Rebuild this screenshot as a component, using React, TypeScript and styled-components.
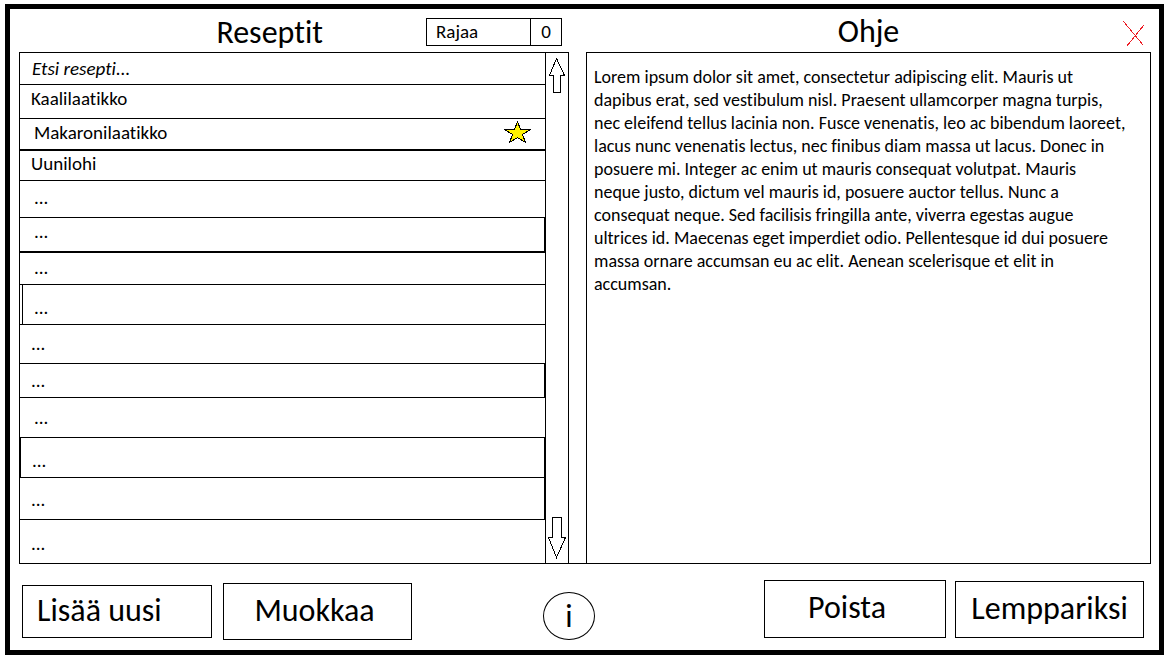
import React from 'react';
import styled, { createGlobalStyle } from 'styled-components';

const GlobalStyle = createGlobalStyle`
  *, *::before, *::after { box-sizing: border-box; }
  body {
    margin: 0;
    background: #fff;
    color: #000;
    font-family: Calibri, Carlito, Lato, sans-serif;
    font-size: 19px;
    line-height: 20px;
    font-variant-ligatures: none;
  }
  button, input { font: inherit; font-variant-ligatures: none; color: inherit; }
`;

const Frame = styled.div`
  margin: 4px 5px 5px;
  border: 5px solid #000;
  padding: 0 8px 10px 9px;
`;

const Main = styled.main`
  display: grid;
  grid-template-columns: minmax(0, 550fr) 17px minmax(0, 565fr);
`;

const ListHeader = styled.header`
  display: flex;
  align-items: center;
  justify-content: flex-end;
  gap: 103px;
  height: 43px;
  padding: 2px 7px 0 0;
`;

const GuideHeader = styled.header`
  grid-column: 3;
  display: grid;
  grid-template-columns: 1fr auto 1fr;
  align-items: center;
  height: 43px;
`;

const Title = styled.h1`
  margin: 0;
  padding-top: 3px;
  font-size: 32px;
  line-height: 34px;
  font-weight: 400;
`;

const GuideTitle = styled(Title)`
  grid-column: 2;
`;

const FilterButton = styled.button`
  display: flex;
  width: 136px;
  height: 28px;
  padding: 0;
  border: 1px solid #000;
  background: #fff;
`;

const FilterLabel = styled.span`
  flex: 1;
  padding: 3px 9px;
  text-align: left;
`;

const FilterCount = styled.span`
  width: 31px;
  padding: 3px 0;
  border-left: 1px solid #000;
`;

const CloseButton = styled.button`
  justify-self: end;
  display: flex;
  padding: 7px 6px 0 0;
  border: 0;
  background: none;
`;

const ListPanel = styled.section`
  display: flex;
  border: 1px solid #000;
`;

const Rows = styled.ul`
  flex: 1;
  min-width: 0;
  margin: 0;
  padding: 0;
  list-style: none;
`;

type RowProps = {
  $height: number;
  $line?: number;
  $left?: number;
  $right?: boolean;
  $raised?: boolean;
  $indent?: boolean;
};

const Row = styled.li<RowProps>`
  display: flex;
  min-height: ${(p) => p.$height}px;
  padding-left: ${(p) => (p.$left ? p.$left - 1 : 0)}px;
  border-bottom: ${(p) => p.$line ?? 1}px solid #000;
  border-right: ${(p) => (p.$right ? 1 : 0)}px solid #000;
`;

const RowButton = styled.button<RowProps>`
  flex: 1;
  display: flex;
  align-items: flex-end;
  justify-content: space-between;
  padding: 0 14px ${(p) => (p.$raised ? 9 : 6)}px ${(p) => (p.$indent ? 14 : 11)}px;
  border: 0;
  border-left: ${(p) => (p.$left ? 1 : 0)}px solid #000;
  background: none;
  text-align: left;
`;

const SearchInput = styled.input`
  flex: 1;
  min-width: 0;
  padding: 0 12px;
  border: 0;
  outline: 0;
  background: none;
  font-style: italic;
  &::placeholder { color: #000; opacity: 1; }
`;

const ScrollColumn = styled.div`
  display: flex;
  flex-direction: column;
  justify-content: space-between;
  align-items: center;
  width: 23px;
  padding: 5px 0 4px;
  border-left: 1px solid #000;
`;

const ScrollButton = styled.button`
  display: flex;
  padding: 0;
  border: 0;
  background: none;
`;

const Seam = styled.div`
  border-bottom: 1px solid #000;
`;

const GuidePanel = styled.article`
  border: 1px solid #000;
  padding: 13px 0 0 7px;
`;

const GuideText = styled.p`
  margin: 0;
  font-size: 18px;
  line-height: 23px;
  white-space: nowrap;
`;

const Footer = styled.footer`
  display: grid;
  grid-template-columns: 524fr 52px 556fr;
  align-items: end;
  padding-top: 16px;
`;

const LeftActions = styled.div`
  display: flex;
  align-items: center;
  gap: 11px;
  padding-left: 3px;
`;

const RightActions = styled.div`
  display: flex;
  align-items: flex-end;
  justify-content: flex-end;
  gap: 9px;
  padding: 0 7px 2px 0;
`;

type ActionProps = { $w: number; $h: number; $start?: boolean; $trail?: number };

const ActionButton = styled.button<ActionProps>`
  width: ${(p) => p.$w}px;
  height: ${(p) => p.$h}px;
  padding: 0 ${(p) => p.$trail ?? 0}px 2px ${(p) => (p.$start ? 14 : 0)}px;
  border: 1px solid #000;
  background: #fff;
  font-size: 32px;
  line-height: 34px;
  text-align: ${(p) => (p.$start ? 'left' : 'center')};
  white-space: nowrap;
`;

const InfoButton = styled.button`
  width: 52px;
  height: 48px;
  padding: 2px 0 0;
  border: 1px solid #000;
  border-radius: 50%;
  background: #fff;
  font-size: 32px;
  line-height: 34px;
`;

const Star = () => (
  <svg width="27" height="22" viewBox="0 0 27 22" shapeRendering="crispEdges" role="img" aria-label="Lemppari">
    <path d="M13.5 .5L16.5 8.5H26.5L18.5 13.5L21.5 21.5L13.5 16.5L5.5 21.5L8.5 13.5L.5 8.5H10.5Z" fill="#fff200" stroke="#000" />
  </svg>
);

type RowData = RowProps & { name: string; favourite?: boolean };

const recipes: RowData[] = [
  { name: 'Kaalilaatikko', $height: 34, $raised: true },
  { name: 'Makaronilaatikko', $height: 32, $line: 2, $indent: true, favourite: true },
  { name: 'Uunilohi', $height: 30 },
  { name: '...', $height: 37, $raised: true, $indent: true },
  { name: '...', $height: 35, $line: 2, $right: true, $raised: true, $indent: true },
  { name: '...', $height: 32, $indent: true },
  { name: '...', $height: 40, $left: 3, $indent: false },
  { name: '...', $height: 39, $raised: true },
  { name: '...', $height: 34, $right: true },
  { name: '...', $height: 40, $raised: true, $indent: true },
  { name: '...', $height: 40, $left: 1, $right: true },
  { name: '...', $height: 42, $right: true, $raised: true },
  { name: '...', $height: 43, $line: 0, $raised: true },
];

const guideLines = [
  'Lorem ipsum dolor sit amet, consectetur adipiscing elit. Mauris ut',
  'dapibus erat, sed vestibulum nisl. Praesent ullamcorper magna turpis,',
  'nec eleifend tellus lacinia non. Fusce venenatis, leo ac bibendum laoreet,',
  'lacus nunc venenatis lectus, nec finibus diam massa ut lacus. Donec in',
  'posuere mi. Integer ac enim ut mauris consequat volutpat. Mauris',
  'neque justo, dictum vel mauris id, posuere auctor tellus. Nunc a',
  'consequat neque. Sed facilisis fringilla ante, viverra egestas augue',
  'ultrices id. Maecenas eget imperdiet odio. Pellentesque id dui posuere',
  'massa ornare accumsan eu ac elit. Aenean scelerisque et elit in',
  'accumsan.',
];

export default function App() {
  return (
    <>
      <GlobalStyle />
      <Frame>
        <Main>
          <ListHeader>
            <Title>Reseptit</Title>
            <FilterButton type="button">
              <FilterLabel>Rajaa</FilterLabel>
              <FilterCount>0</FilterCount>
            </FilterButton>
          </ListHeader>
          <GuideHeader>
            <GuideTitle>Ohje</GuideTitle>
            <CloseButton type="button" aria-label="Sulje">
              <svg width="22" height="26" viewBox="0 0 22 26" shapeRendering="crispEdges">
                <path d="M.5 .5L20.5 24.5M20.5 4.5L3.5 25.5" stroke="#ed1c24" fill="none" />
              </svg>
            </CloseButton>
          </GuideHeader>
          <ListPanel>
            <Rows>
              <Row $height={32}>
                <SearchInput type="text" aria-label="Etsi resepti" placeholder="Etsi resepti..." />
              </Row>
              {recipes.map(({ name, favourite, ...row }, i) => (
                <Row key={i} {...row}>
                  <RowButton type="button" {...row}>
                    {name}
                    {favourite && <Star />}
                  </RowButton>
                </Row>
              ))}
            </Rows>
            <ScrollColumn>
              <ScrollButton type="button" aria-label="Ylös">
                <svg width="16" height="36" viewBox="0 0 16 36" shapeRendering="crispEdges">
                  <path d="M7.5 .5L15.5 17.5H11.5V34.5H4.5V17.5H.5Z" fill="#fff" stroke="#000" />
                </svg>
              </ScrollButton>
              <ScrollButton type="button" aria-label="Alas">
                <svg width="18" height="42" viewBox="0 0 18 42" shapeRendering="crispEdges">
                  <path d="M4.5 .5H13.5V20.5H17.5L8.5 40.5L.5 20.5H4.5Z" fill="#fff" stroke="#000" />
                </svg>
              </ScrollButton>
            </ScrollColumn>
          </ListPanel>
          <Seam />
          <GuidePanel>
            <GuideText>
              {guideLines.map((line) => (
                <React.Fragment key={line}>
                  {line}
                  <br />
                </React.Fragment>
              ))}
            </GuideText>
          </GuidePanel>
        </Main>
        <Footer>
          <LeftActions>
            <ActionButton type="button" $w={190} $h={53} $start>Lisää uusi</ActionButton>
            <ActionButton type="button" $w={189} $h={57} $trail={6}>Muokkaa</ActionButton>
          </LeftActions>
          <InfoButton type="button" aria-label="Info">i</InfoButton>
          <RightActions>
            <ActionButton type="button" $w={182} $h={58} $trail={16}>Poista</ActionButton>
            <ActionButton type="button" $w={189} $h={57}>Lemppariksi</ActionButton>
          </RightActions>
        </Footer>
      </Frame>
    </>
  );
}
